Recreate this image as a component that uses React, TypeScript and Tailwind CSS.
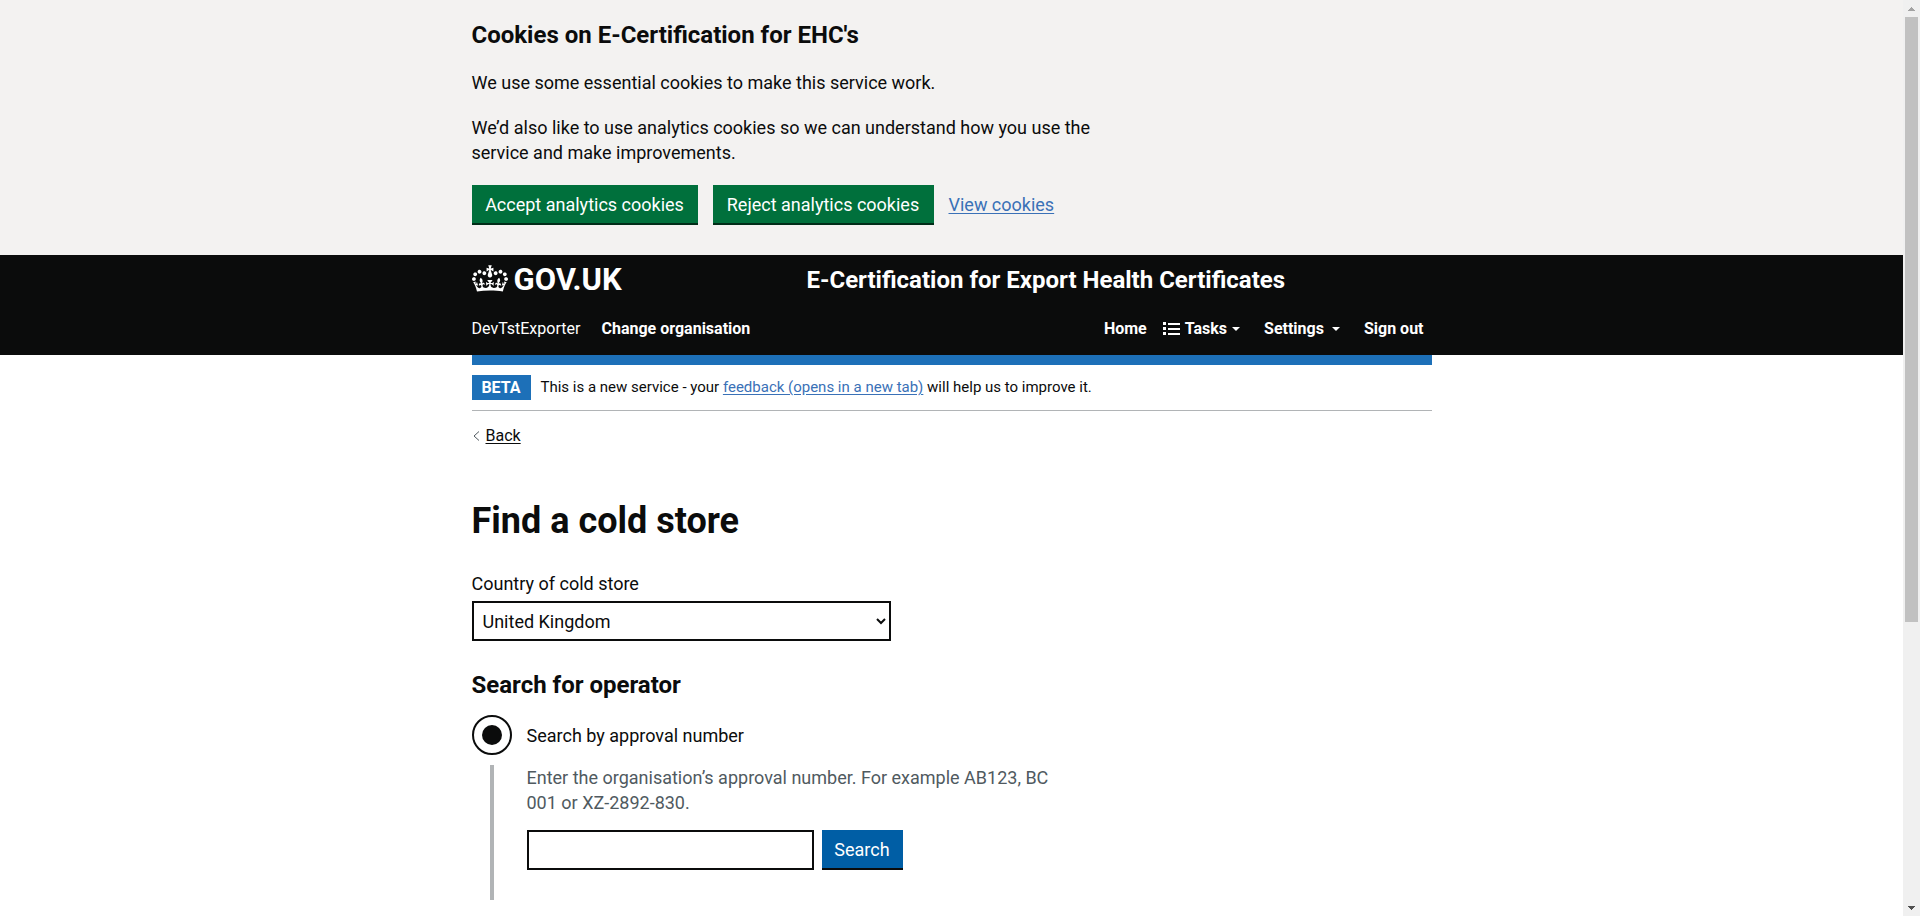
import { ReactNode } from "react";

const CROWN =
  "M25 30.2c3.5 1.5 7.7-.2 9.1-3.7 1.5-3.6-.2-7.8-3.9-9.2-3.6-1.4-7.6.3-9.1 3.9-1.4 3.5.3 7.5 3.9 9zM9 39.5c3.6 1.5 7.8-.2 9.2-3.7 1.5-3.6-.2-7.8-3.9-9.1-3.6-1.5-7.6.2-9.1 3.8-1.4 3.5.3 7.5 3.8 9zM4.4 57.2c3.5 1.5 7.7-.2 9.1-3.8 1.5-3.6-.2-7.7-3.9-9.1-3.5-1.5-7.6.3-9.1 3.8-1.4 3.5.3 7.6 3.9 9.1zm38.3-21.4c3.5 1.5 7.7-.2 9.1-3.8 1.5-3.6-.2-7.7-3.9-9.1-3.6-1.5-7.6.3-9.1 3.8-1.3 3.6.4 7.7 3.9 9.1zm64.4-5.6c-3.6 1.5-7.8-.2-9.1-3.7-1.5-3.6.2-7.8 3.8-9.2 3.6-1.4 7.7.3 9.2 3.9 1.3 3.5-.4 7.5-3.9 9zm15.9 9.3c-3.6 1.5-7.7-.2-9.1-3.7-1.5-3.6.2-7.8 3.7-9.1 3.6-1.5 7.7.2 9.2 3.8 1.5 3.5-.3 7.5-3.8 9zm4.7 17.7c-3.6 1.5-7.8-.2-9.2-3.8-1.5-3.6.2-7.7 3.9-9.1 3.6-1.5 7.7.3 9.2 3.8 1.3 3.5-.4 7.6-3.9 9.1zM89.3 35.8c-3.6 1.5-7.8-.2-9.2-3.8-1.4-3.6.2-7.7 3.9-9.1 3.6-1.5 7.7.3 9.2 3.8 1.4 3.6-.3 7.7-3.9 9.1zM69.7 17.7l8.9 4.7V9.3l-8.9 2.8c-.2-.3-.5-.6-.9-.9L72.4 0H59.6l3.5 11.2c-.3.3-.6.5-.9.9l-8.8-2.8v13.1l8.8-4.7c.3.3.6.7.9.9l-5 15.4v.1c-.2.8-.4 1.6-.4 2.4 0 4.1 3.1 7.5 7 8.1h.2c.3 0 .7.1 1 .1.4 0 .7 0 1-.1h.2c4-.6 7.1-4.1 7.1-8.1 0-.8-.1-1.7-.4-2.4V34l-5.1-15.4c.4-.2.7-.6 1-.9zM66 92.8c16.9 0 32.8 1.1 47.1 3.2 4-16.9 8.9-26.7 14-33.5l-9.6-3.4c1 4.9 1.1 7.2 0 10.2-1.5-1.4-3-4.3-4.2-8.7L108.6 76c2.8-2 5-3.2 7.5-3.3-4.4 9.4-10 11.9-13.6 11.2-4.3-.8-6.3-4.6-5.6-7.9 1-4.7 5.7-5.9 8-.5 4.3-8.7-3-11.4-7.6-8.8 7.1-7.2 7.9-13.5 2.1-21.1-8 6.1-8.1 12.3-4.5 20.8-4.7-5.4-12.1-2.5-9.5 6.2 3.4-5.2 7.9-2 7.2 3.1-.6 4.3-6.4 7.8-13.5 7.2-10.3-.9-10.9-8-11.2-13.8 2.5-.5 7.1 1.8 11 7.3L80.2 60c-4.1 4.4-8 5.3-12.3 5.4 1.4-4.4 8-11.6 8-11.6H55.5s6.4 7.2 7.9 11.6c-4.2-.1-8-1-12.3-5.4l1.4 16.4c3.9-5.5 8.5-7.7 10.9-7.3-.3 5.8-.9 12.8-11.1 13.8-7.2.6-12.9-2.9-13.5-7.2-.7-5 3.8-8.3 7.1-3.1 2.7-8.7-4.6-11.6-9.4-6.2 3.7-8.5 3.6-14.7-4.6-20.8-5.8 7.6-5 13.9 2.2 21.1-4.7-2.6-11.9.1-7.7 8.8 2.3-5.5 7.1-4.2 8.1.5.7 3.3-1.3 7.1-5.7 7.9-3.5.7-9-1.8-13.5-11.2 2.5.1 4.7 1.3 7.5 3.3l-4.7-15.4c-1.2 4.4-2.7 7.2-4.3 8.7-1.1-3-.9-5.3 0-10.2l-9.5 3.4c5 6.9 9.9 16.7 14 33.5 14.8-2.1 30.8-3.2 47.7-3.2z";

function Container({ children }: { children: ReactNode }) {
  return <div className="mx-auto w-full max-w-[960px]">{children}</div>;
}

function Caret() {
  return (
    <svg viewBox="0 0 8 4" className="h-1 w-2 shrink-0" fill="currentColor" aria-hidden="true">
      <path d="M0 0h8L4 4z" />
    </svg>
  );
}

function TasksIcon() {
  return (
    <svg viewBox="0 0 17 14" className="h-3.5 w-[17px] shrink-0" fill="currentColor" aria-hidden="true">
      <path d="M0 0h3v3H0zM0 5h3v3H0zM0 10h3v3H0zM5 1h12v2H5zM5 6h12v2H5zM5 11h12v2H5z" />
    </svg>
  );
}

function CookieBanner() {
  return (
    <section aria-label="Cookies on E-Certification for EHC's" className="bg-[#f3f2f1] pt-5 pb-[30px]">
      <Container>
        <div className="max-w-[640px]">
          <h2 className="mb-5 text-2xl leading-[30px] font-bold">Cookies on E-Certification for EHC's</h2>
          <p className="mb-5">We use some essential cookies to make this service work.</p>
          <p className="mb-5">
            We’d also like to use analytics cookies so we can understand how you use the service and make improvements.
          </p>
        </div>
        <div className="flex items-center gap-[15px]">
          <button type="button" className="h-10 w-[226px] border-b-2 border-[#002d18] bg-[#00703c] text-white">
            Accept analytics cookies
          </button>
          <button type="button" className="h-10 w-[221px] border-b-2 border-[#002d18] bg-[#00703c] text-white">
            Reject analytics cookies
          </button>
          <a href="#cookies" className="pb-0.5 text-[#3a71b7] underline underline-offset-2">
            View cookies
          </a>
        </div>
      </Container>
    </section>
  );
}

function Header() {
  return (
    <header className="bg-[#0b0c0c] pt-2.5 text-white">
      <Container>
        <div className="flex h-[30px] items-center">
          <a href="#home" className="flex w-[335px] items-center gap-1.5 text-[31px] leading-[30px] font-bold">
            <svg viewBox="0 0 132 97" className="h-[27px] w-9 self-start" fill="currentColor" aria-hidden="true">
              <path d={CROWN} />
            </svg>
            GOV.UK
          </a>
          <a href="#service" className="text-2xl leading-[30px] font-bold">
            E-Certification for Export Health Certificates
          </a>
        </div>
        <div className="flex h-[60px] items-center pt-2 pr-2 text-base leading-5">
          <span className="w-[130px]">DevTstExporter</span>
          <a href="#organisation" className="font-bold">
            Change organisation
          </a>
          <nav aria-label="Main" className="ml-auto flex items-center font-bold">
            <a href="#home" className="mr-4">Home</a>
            <button type="button" className="mr-6 flex items-center gap-[5px]">
              <TasksIcon />
              Tasks
              <Caret />
            </button>
            <button type="button" className="mr-6 flex items-center gap-2">
              Settings
              <Caret />
            </button>
            <a href="#signout">Sign out</a>
          </nav>
        </div>
      </Container>
    </header>
  );
}

function ColdStoreForm() {
  return (
    <form onSubmit={(e) => e.preventDefault()}>
      <label htmlFor="country" className="mb-[5px] block">
        Country of cold store
      </label>
      <select id="country" className="block h-10 w-[419px] border-2 border-[#0b0c0c] bg-white p-[5px]">
        <option>United Kingdom</option>
      </select>
      <fieldset className="mt-[29px]">
        <legend className="mb-[15px] text-2xl leading-[30px] font-bold">Search for operator</legend>
        <div className="flex items-center gap-[15px]">
          <input
            id="by-number"
            name="search-by"
            type="radio"
            defaultChecked
            className="grid size-10 appearance-none place-items-center rounded-full border-2 border-[#0b0c0c] before:size-5 before:rounded-full before:bg-[#0b0c0c]"
          />
          <label htmlFor="by-number">Search by approval number</label>
        </div>
        <div className="mt-2.5 ml-[18px] h-[135px] border-l-4 border-[#b1b4b6] pl-[33px]">
          <label htmlFor="approval" className="mb-[15px] block max-w-[560px] text-[#505a5f]">
            Enter the organisation’s approval number. For example AB123, BC
            <br />
            001 or XZ-2892-830.
          </label>
          <div className="flex gap-2">
            <input id="approval" type="text" className="h-10 w-[287px] border-2 border-[#0b0c0c] p-[5px]" />
            <button type="submit" className="h-10 w-[81px] border-b-2 border-[#0b0c0c] bg-[#005ea5] text-white">
              Search
            </button>
          </div>
        </div>
      </fieldset>
    </form>
  );
}

function Scrollbar() {
  return (
    <div aria-hidden="true" className="sticky top-0 flex h-screen w-[17px] shrink-0 flex-col items-center bg-[#f0f0f0]">
      <div className="flex h-[17px] shrink-0 items-center">
        <svg viewBox="0 0 7 4" className="h-1 w-[7px]" fill="#a3a3a3">
          <path d="M3 0h1v1h1v1h1v1h1v1H0V3h1V2h1V1h1z" />
        </svg>
      </div>
      <div className="h-[66%] w-[13px] bg-[#c1c1c1]" />
      <div className="mt-auto flex h-[17px] shrink-0 items-center">
        <svg viewBox="0 0 7 4" className="h-1 w-[7px]" fill="#505050">
          <path d="M0 0h7v1H6v1H5v1H4v1H3V3H2V2H1V1H0z" />
        </svg>
      </div>
    </div>
  );
}

export default function App() {
  return (
    <div className="flex min-h-screen bg-white font-[Roboto,'Liberation_Sans',sans-serif] text-lg leading-[25px] text-[#0b0c0c]">
      <div className="min-w-0 flex-1">
        <CookieBanner />
        <Header />
        <Container>
          <div className="h-2.5 bg-[#1d70b8]" />
          <div className="flex items-center gap-2.5 border-b border-[#b1b4b6] py-2.5 text-[15px] leading-[25px]">
            <strong className="h-[25px] w-[59px] bg-[#1d70b8] text-center text-base leading-[25px] text-white">
              BETA
            </strong>
            <span>
              This is a new service - your{" "}
              <a href="#feedback" className="text-[#3a71b7] underline underline-offset-2">
                feedback (opens in a new tab)
              </a>{" "}
              will help us to improve it.
            </span>
          </div>
          <a href="#back" className="mt-[15px] flex w-fit items-center gap-1.5 text-base leading-5">
            <svg viewBox="0 0 8 10" className="h-2.5 w-2" fill="none" stroke="#505a5f" aria-hidden="true">
              <path d="M7 .5 2 5l5 4.5" />
            </svg>
            <span className="underline underline-offset-2">Back</span>
          </a>
          <main className="pt-[55px]">
            <h1 className="mb-[30px] text-4xl leading-10 font-bold">Find a cold store</h1>
            <ColdStoreForm />
          </main>
        </Container>
      </div>
      <Scrollbar />
    </div>
  );
}
